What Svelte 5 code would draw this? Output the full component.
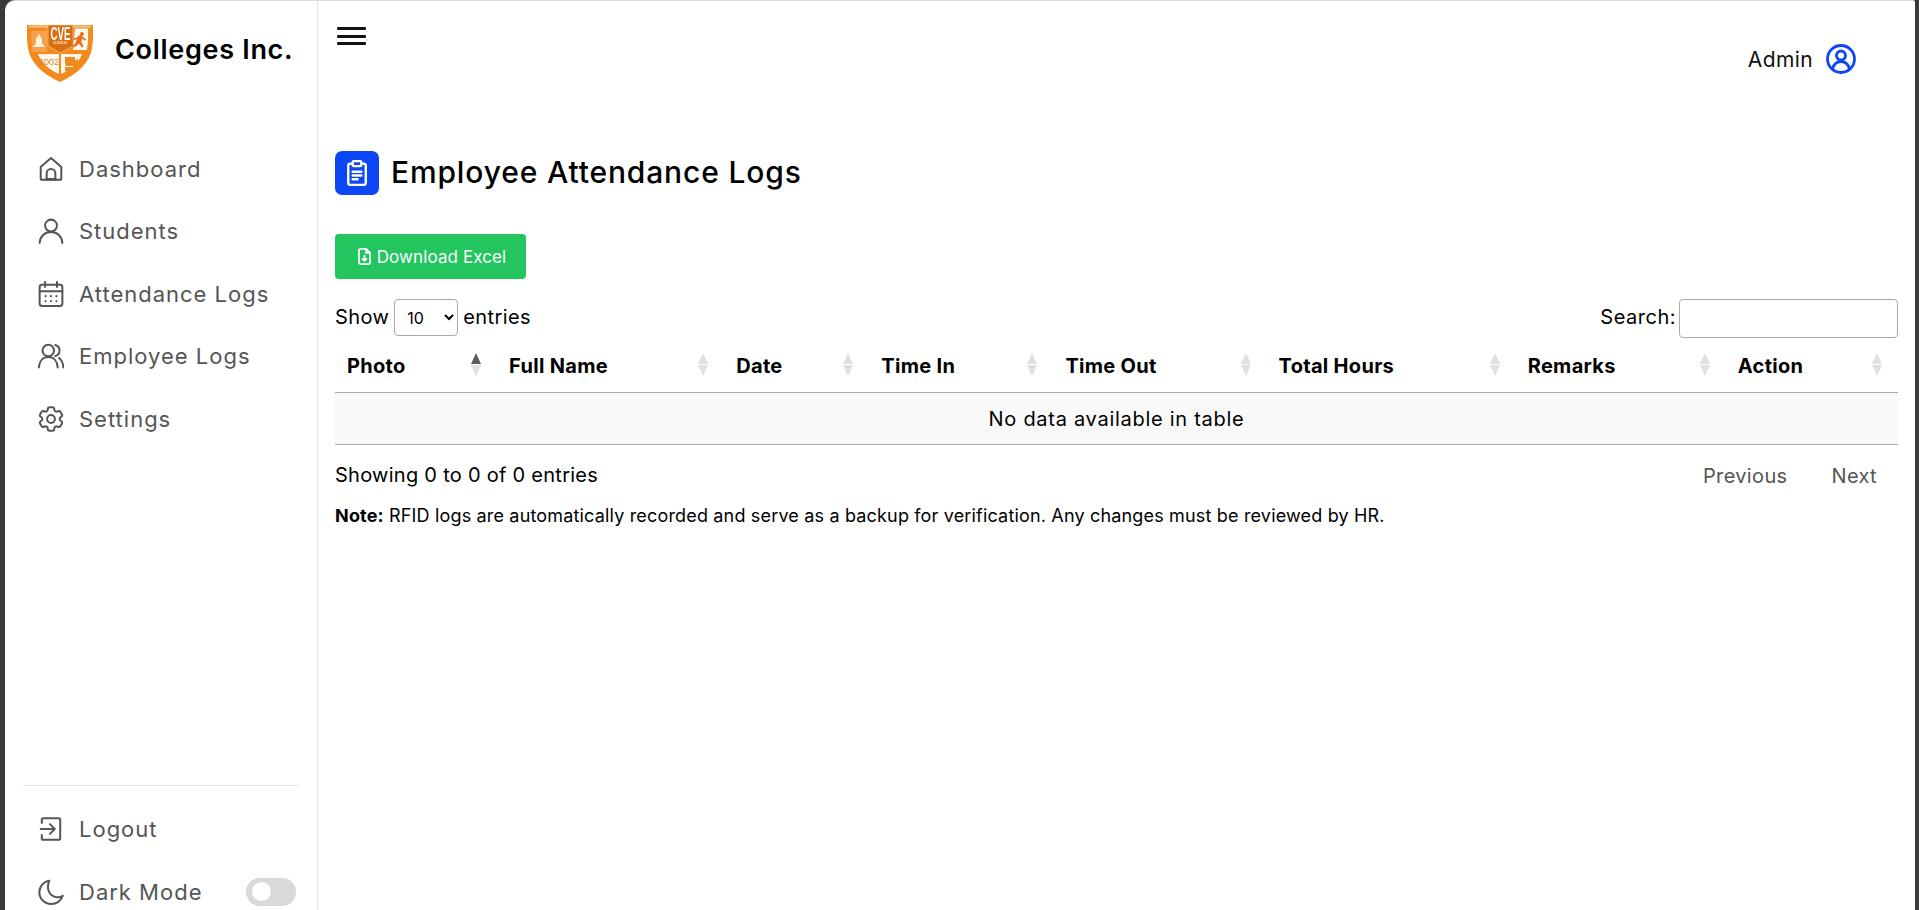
<script>
  const nav = [
    { label: 'Dashboard', icon: 'home' },
    { label: 'Students', icon: 'user' },
    { label: 'Attendance Logs', icon: 'cal' },
    { label: 'Employee Logs', icon: 'users' },
    { label: 'Settings', icon: 'gear' }
  ];
  const cols = [
    { label: 'Photo', w: 162, active: true },
    { label: 'Full Name', w: 227 },
    { label: 'Date', w: 145 },
    { label: 'Time In', w: 184 },
    { label: 'Time Out', w: 213 },
    { label: 'Total Hours', w: 249 },
    { label: 'Remarks', w: 210 },
    { label: 'Action', w: 172 }
  ];
</script>

{#snippet icon(name)}
  <svg class="nav-icon" viewBox={name === 'gear' ? '2 2 20 20' : '0 0 24 24'} fill="none" stroke="currentColor" stroke-width={name === 'gear' ? 1.55 : 1.85} stroke-linecap="round" stroke-linejoin="round">
    {#if name === 'home'}
      <path d="M2.5 10.2 12 1.8l9.500 8.400V20.500a1.500 1.500 0 0 1-1.500 1.500H4a1.500 1.500 0 0 1-1.500-1.500z" />
      <path d="M8 22v-6a4 4 0 0 1 8 0v6" />
      <path d="M8 21.500h8" stroke-width="2.400" />
    {:else if name === 'user'}
      <circle cx="12" cy="7" r="5.500" />
      <path d="M1.500 23c.4-6 4.700-10 10.500-10s10.100 4 10.500 10" />
    {:else if name === 'cal'}
      <rect x="1.500" y="3.500" width="21" height="19.500" rx="2.200" />
      <path d="M6.500 1v4.500M17.500 1v4.500M1.500 9.500h21" />
      <path d="M7 14h.01M12 14h.01M17 14h.01M7 18.500h.01M12 18.500h.01M17 18.500h.01" stroke-width="2" />
    {:else if name === 'users'}
      <circle cx="9.500" cy="7" r="5.300" />
      <path d="M.8 22.500c.4-5.800 3.800-9.500 8.700-9.500s8.300 3.700 8.700 9.500" />
      <path d="M16 1.900a5.300 5.300 0 0 1 0 10.200M19.500 14c2.500 1.700 3.700 4.500 3.900 8.500" />
    {:else if name === 'gear'}
      <path d="M9.594 3.940c.09-.542.56-.94 1.110-.94h2.593c.55 0 1.020.398 1.110.94l.213 1.281c.063.374.313.686.645.870.074.04.147.083.22.127.324.196.72.257 1.075.124l1.217-.456a1.125 1.125 0 0 1 1.370.49l1.296 2.247a1.125 1.125 0 0 1-.26 1.431l-1.003.827c-.293.24-.438.613-.431.992a6.759 6.759 0 0 1 0 .255c-.007.378.138.75.43.99l1.005.828c.424.35.534.954.26 1.430l-1.298 2.247a1.125 1.125 0 0 1-1.369.491l-1.217-.456c-.355-.133-.75-.072-1.076.124a6.570 6.570 0 0 1-.22.128c-.331.183-.581.495-.644.869l-.213 1.280c-.09.543-.56.941-1.110.941h-2.594c-.55 0-1.020-.398-1.110-.94l-.213-1.281c-.062-.374-.312-.686-.644-.87a6.520 6.520 0 0 1-.22-.127c-.325-.196-.72-.257-1.076-.124l-1.217.456a1.125 1.125 0 0 1-1.369-.49l-1.297-2.247a1.125 1.125 0 0 1 .26-1.431l1.004-.827c.292-.24.437-.613.43-.992a6.932 6.932 0 0 1 0-.255c.007-.378-.138-.75-.43-.99l-1.004-.828a1.125 1.125 0 0 1-.26-1.430l1.297-2.247a1.125 1.125 0 0 1 1.370-.491l1.216.456c.356.133.751.072 1.076-.124.072-.044.146-.087.22-.128.332-.183.582-.495.644-.869l.214-1.281z" />
      <circle cx="12" cy="12" r="3" />
    {:else if name === 'logout'}
      <path d="M3.500 6.500V3.500A1.500 1.500 0 0 1 5 2h14a1.500 1.500 0 0 1 1.500 1.500v17A1.500 1.500 0 0 1 19 22H5a1.500 1.500 0 0 1-1.500-1.500v-3" />
      <path d="M2.500 12h12.500M11 7.500l4.500 4.500-4.500 4.500" />
    {:else if name === 'moon'}
      <path d="M10.500 1.500A10.800 10.800 0 0 0 1.200 12.300c0 6 4.800 10.700 10.800 10.700 4.800 0 9-3 10.800-7.500-1.500 1.100-3.500 1.600-5.500 1.300C11 16 7 9.500 10.500 1.500z" />
    {/if}
  </svg>
{/snippet}

<div class="window">
  <aside class="sidebar">
    <div class="brand">
      <svg class="logo" viewBox="0 0 66 58">
        <path d="M0 1h66c0 7 .5 14-1 23-2 14-14 26-32 34C15 50 3 38 1 24-.5 15 0 8 0 1z" fill="#f28a1c" />
        <path d="M2 1.500h62v2H2z" fill="#f9c48c" />
        <path d="M4 7h16v21H5.500C4.500 21 4 14 4 7z" fill="#f6a048" />
        <path d="M12 10l3 5v4l3 4H6l3-4v-4z" fill="#fff3e2" />
        <path d="M48 4.500h13c.4 7 0 14-1 21.500H46z" fill="#fff8ef" />
        <path d="M21 1h25v21L33.500 29 21 22z" fill="#d9700f" stroke="#fbd3a6" stroke-width=".6" />
        <path d="M55 8a2 2 0 1 1-.1 0zM53 11l-4 3-3 .5 1 1.500 3-1-2 5-3 2 1 1.500 4-2 2-2 3 4 1.500-1-2.500-5 1.500-3 2 2 2-1z" fill="#ee6a12" />
        <path d="M11 30h21v20C22 46 14 38 11 30z" fill="#fff8ef" />
        <path d="M34 30h21c-3 8-11 16-21 20z" fill="#fff8ef" />
        <path d="M38 33h10v3l3-1v7H39l-1-3zM38 43h10v2l-7 3-3-1z" fill="#ee8a22" />
        <text x="33.500" y="16" class="cve" textLength="20" lengthAdjust="spacingAndGlyphs">CVE</text>
        <text x="33.500" y="20" class="inc" textLength="15" lengthAdjust="spacingAndGlyphs">COLLEGES, INC.</text>
        <text x="22" y="41" class="year">2002</text>
      </svg>
      <span class="brand-name">Colleges Inc.</span>
    </div>

    <nav class="nav">
      {#each nav as item}
        <a class="nav-item" href="#top">{@render icon(item.icon)}<span>{item.label}</span></a>
      {/each}
    </nav>

    <div class="foot">
      <a class="nav-item" href="#top">{@render icon('logout')}<span>Logout</span></a>
      <div class="nav-item">
        {@render icon('moon')}<span>Dark Mode</span>
        <span class="toggle"><span class="knob"></span></span>
      </div>
    </div>
  </aside>

  <main class="main">
    <header class="topbar">
      <button class="burger" aria-label="Menu"><span></span><span></span><span></span></button>
      <div class="account">
        <span>Admin</span>
        <svg class="avatar" viewBox="0 0 30 30" fill="none" stroke="#0d47f5" stroke-width="2.800">
          <circle cx="15" cy="15" r="13.500" />
          <circle cx="15" cy="11.500" r="4.500" />
          <path d="M6.500 25c1.400-5 4.500-7.500 8.500-7.500s7.100 2.500 8.500 7.500" />
        </svg>
      </div>
    </header>

    <div class="title-row">
      <span class="title-icon">
        <svg viewBox="0 0 24 24" fill="none" stroke="#fff" stroke-width="1.900" stroke-linecap="round" stroke-linejoin="round">
          <path d="M8.500 4.500H6.500A1.500 1.500 0 0 0 5 6v14a1.500 1.500 0 0 0 1.500 1.500h11A1.500 1.500 0 0 0 19 20V6a1.500 1.500 0 0 0-1.500-1.500h-2" />
          <rect x="8.500" y="2.500" width="7" height="4" rx="1" />
          <path d="M8.500 11h7M8.500 14h7M8.500 17h4" />
        </svg>
      </span>
      <h1>Employee Attendance Logs</h1>
    </div>

    <button class="download">
      <svg viewBox="0 0 24 24" fill="none" stroke="#fff" stroke-width="2.200" stroke-linecap="round" stroke-linejoin="round">
        <path d="M14 2.500H7A2 2 0 0 0 5 4.500v15a2 2 0 0 0 2 2h10a2 2 0 0 0 2-2v-12z" />
        <path d="M14 2.500v5h5" />
        <path d="M12 11v6M9.500 15l2.500 2.500 2.500-2.500" />
      </svg>
      Download Excel
    </button>

    <div class="controls">
      <label class="length">Show
        <select><option>10</option><option>25</option><option>50</option></select>
        entries</label>
      <label class="search"><span class="search-label">Search:</span><input type="search" /></label>
    </div>

    <table>
      <colgroup>
        {#each cols as c}<col style="width:{c.w}px" />{/each}
      </colgroup>
      <thead>
        <tr>
          {#each cols as c}
            <th>
              <span class="th-label">{c.label}</span>
              <span class="sort"><i class="up" class:on={c.active}></i><i class="down"></i></span>
            </th>
          {/each}
        </tr>
      </thead>
      <tbody>
        <tr><td colspan="8">No data available in table</td></tr>
      </tbody>
    </table>

    <div class="table-foot">
      <div class="info">Showing 0 to 0 of 0 entries</div>
      <div class="pager"><a href="#top">Previous</a><a href="#top">Next</a></div>
    </div>

    <p class="note"><strong>Note:</strong> RFID logs are automatically recorded and serve as a backup for verification. Any changes must be reviewed by HR.</p>
  </main>
</div>

<style>
  :global(body) {
    margin: 0;
    background: #3a3a3a;
    overflow: hidden;
  }
  .window {
    display: flex;
    height: 909px;
    margin: 1px 4px 0 5px;
    background: #fff;
    border-top-left-radius: 10px;
    border-top-right-radius: 2px;
    box-shadow: 0 -1px 0 #dcdcdc;
    font-family: Inter, "Noto Sans", sans-serif;
    color: #000;
    overflow: hidden;
  }
  .sidebar {
    width: 313px;
    flex: none;
    box-sizing: border-box;
    border-right: 1px solid #e3e3e3;
    display: flex;
    flex-direction: column;
    padding: 0 18px;
  }
  .brand {
    display: flex;
    align-items: center;
    height: 99px;
    gap: 22px;
    padding-left: 4px;
  }
  .logo { width: 66px; height: 58px; flex: none; margin-top: 5px; filter: blur(.3px); }
  .cve { font: 700 18px "Liberation Sans", sans-serif; fill: #fff; text-anchor: middle; }
  .inc { font: 700 3px "Liberation Sans", sans-serif; fill: #ffe6cc; text-anchor: middle; }
  .year { font: 400 9px "Liberation Sans", sans-serif; fill: #d9822b; text-anchor: middle; }
  .brand-name {
    font-size: 27px;
    font-weight: 600;
    white-space: nowrap;
    letter-spacing: .7px;
    margin-top: -3px;
  }
  .nav {
    display: flex;
    flex-direction: column;
    margin-top: 37.500px;
    flex: 1;
  }
  .nav-item {
    display: flex;
    align-items: center;
    height: 62.500px;
    gap: 15px;
    padding-left: 15px;
    color: #555;
    font-size: 22px;
    letter-spacing: 1px;
    text-decoration: none;
  }
  .nav-icon { width: 26px; height: 26px; flex: none; }
  .foot {
    border-top: 1px solid #e3e3e3;
    padding-top: 12px;
    margin-bottom: -13px;
  }
  .toggle {
    margin-left: auto;
    margin-right: 3px;
    width: 50px;
    height: 28px;
    border-radius: 14px;
    background: #d9d9d9;
    display: flex;
    align-items: center;
    padding-left: 6px;
    box-sizing: border-box;
  }
  .knob { width: 19px; height: 19px; border-radius: 50%; background: #fff; }

  .main {
    flex: 1;
    min-width: 0;
    padding: 0 17px 0 17px;
  }
  .topbar {
    display: flex;
    justify-content: space-between;
    align-items: flex-start;
    height: 150px;
  }
  .burger {
    margin: 26px 0 0 2px;
    background: none;
    border: 0;
    padding: 0;
    width: 29px;
    height: 18px;
    display: flex;
    flex-direction: column;
    justify-content: space-between;
  }
  .burger span { display: block; height: 3px; background: #111; border-radius: 1px; }
  .account {
    display: flex;
    align-items: center;
    gap: 13px;
    margin-top: 43px;
    margin-right: 42px;
    font-size: 21px;
    letter-spacing: .4px;
    color: #111;
  }
  .avatar { width: 30px; height: 30px; }
  .title-row {
    display: flex;
    align-items: center;
    gap: 12px;
  }
  .title-icon {
    width: 44px;
    height: 44px;
    border-radius: 7px;
    background: #0d47f5;
    display: flex;
    align-items: center;
    justify-content: center;
  }
  .title-icon svg { width: 30px; height: 30px; }
  h1 {
    margin: -2px 0 0;
    font-size: 30px;
    font-weight: 500;
    letter-spacing: .85px;
  }
  .download {
    margin-top: 39px;
    width: 191px;
    height: 45px;
    border: 0;
    border-radius: 4px;
    background: #22c55e;
    color: #fff;
    font: 400 17px Inter, sans-serif;
    letter-spacing: .1px;
    display: flex;
    align-items: center;
    justify-content: center;
    gap: 3px;
  }
  .download svg { width: 19px; height: 19px; }
  .controls {
    display: flex;
    justify-content: space-between;
    align-items: flex-start;
    margin-top: 20px;
    font-size: 20px;
    letter-spacing: .4px;
    height: 39px;
  }
  .length { display: flex; align-items: center; gap: 5px; height: 37px; white-space: nowrap; margin-top: -1px; }
  select {
    width: 64px;
    height: 37px;
    margin-top: 2px;
    border: 1px solid #aaa;
    border-radius: 4px;
    background: #fff;
    font: 400 16px Inter, sans-serif;
    padding-left: 8px;
    color: #000;
  }
  .search { display: flex; align-items: center; gap: 3px; letter-spacing: .5px; }
  .search-label { margin-top: -4px; }
  input {
    width: 219px;
    height: 39px;
    box-sizing: border-box;
    border: 1px solid #aaa;
    border-radius: 4px;
    background: #fff;
  }
  table {
    width: 100%;
    table-layout: fixed;
    border-collapse: collapse;
    margin-top: 6px;
  }
  th {
    position: relative;
    text-align: left;
    height: 48px;
    padding: 0 12px;
    font-size: 20px;
    font-weight: 700;
    letter-spacing: .3px;
    box-sizing: border-box;
    border-bottom: 1px solid #aaa;
  }
  .th-label { position: relative; top: -2px; }
  td {
    height: 52px;
    text-align: center;
    background: #f9f9f9;
    font-size: 20px;
    letter-spacing: .72px;
    border-bottom: 1px solid #aaa;
    padding: 2px 0 0;
    box-sizing: border-box;
  }
  .sort {
    position: absolute;
    right: 16px;
    top: 9px;
    display: flex;
    flex-direction: column;
    gap: 1px;
  }
  .sort i { display: block; width: 0; height: 0; border-left: 5.500px solid transparent; border-right: 5.500px solid transparent; }
  .up { border-bottom: 11px solid #e0e0e0; }
  .up.on { border-bottom-color: #5e5e5e; }
  .down { border-top: 11px solid #e0e0e0; }
  .table-foot {
    display: flex;
    justify-content: space-between;
    align-items: center;
    margin-top: 13px;
    height: 36px;
    font-size: 20px;
  }
  .info { letter-spacing: .27px; margin-top: -1px; }
  .pager { display: flex; gap: 44px; padding-right: 21px; letter-spacing: .35px; }
  .pager a { color: #555; text-decoration: none; }
  .note {
    margin: 10px 0 0;
    font-size: 18px;
    letter-spacing: .17px;
    line-height: 24px;
  }
</style>
